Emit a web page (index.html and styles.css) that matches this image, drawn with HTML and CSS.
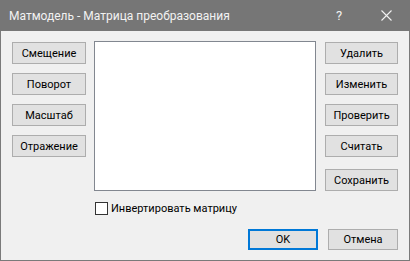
FILE: index.html
```html
<!DOCTYPE html>
<html lang="ru">
<head>
    <meta charset="UTF-8">
    <title>Матмодель - Матрица преобразования</title>
    <link rel="stylesheet" href="styles.css">
</head>
<body>
    <div class="window">
        <div class="titlebar">
            <span class="title">Матмодель - Матрица преобразования</span>
            <span class="help">?</span>
            <span class="close">
                <svg width="11" height="11" viewBox="0 0 11 11"><path d="M0.5 0.5 L10.5 10.5 M10.5 0.5 L0.5 10.5" stroke="#f2f2f2" stroke-width="1.1" fill="none"/></svg>
            </span>
        </div>
        <div class="content">
            <div class="main">
                <div class="col left-col">
                    <button class="btn">Смещение</button>
                    <button class="btn">Поворот</button>
                    <button class="btn">Масштаб</button>
                    <button class="btn">Отражение</button>
                </div>
                <div class="center-col">
                    <div class="listbox"></div>
                    <label class="check"><span class="box"></span>Инвертировать матрицу</label>
                </div>
                <div class="col right-col">
                    <button class="btn">Удалить</button>
                    <button class="btn">Изменить</button>
                    <button class="btn">Проверить</button>
                    <button class="btn">Считать</button>
                    <button class="btn save">Сохранить</button>
                </div>
            </div>
            <div class="footer">
                <button class="btn ok">OK</button>
                <button class="btn">Отмена</button>
            </div>
        </div>
    </div>
</body>
</html>
```

FILE: styles.css
```css
body {
    margin: 0;
    font-family: Roboto, "Noto Sans", sans-serif;
    font-size: 11px;
    color: #000;
}
.window {
    width: 410px;
    height: 261px;
    box-sizing: border-box;
    background: #f0f0f0;
    border: 1px solid #7a7a7a;
    border-top: none;
}
.titlebar {
    height: 31px;
    background: #767676;
    margin: 0 -1px;
    display: flex;
    align-items: center;
    color: #f2f2f2;
    font-size: 12px;
}
.title {
    margin-left: 9px;
    flex: 1;
}
.help {
    width: 12px;
    margin-right: 33px;
    font-size: 13px;
}
.close {
    width: 11px;
    height: 11px;
    margin-right: 18px;
    display: flex;
}
.content {
    padding: 10px 11px 0 11px;
}
.main {
    display: flex;
}
.col {
    display: flex;
    flex-direction: column;
    gap: 9px;
    padding-top: 1px;
}
.left-col {
    width: 74px;
}
.right-col {
    width: 73px;
}
.center-col {
    margin: 0 9px 0 8px;
}
.btn {
    height: 22px;
    box-sizing: border-box;
    background: #e1e1e1;
    border: 1px solid #adadad;
    font-family: inherit;
    font-size: 11px;
    color: #000;
    padding: 0;
}
.save {
    margin-top: 3px;
}
.listbox {
    width: 222px;
    height: 150px;
    box-sizing: border-box;
    background: #fff;
    border: 1px solid #828790;
}
.check {
    display: flex;
    align-items: center;
    margin-top: 11px;
    margin-left: 1px;
    height: 13px;
}
.box {
    width: 13px;
    height: 13px;
    box-sizing: border-box;
    border: 1px solid #333;
    background: #fff;
    margin-right: 3px;
}
.footer {
    display: flex;
    justify-content: flex-end;
    gap: 10px;
    margin-top: 14px;
}
.footer .btn {
    width: 70px;
    height: 21px;
}
.ok {
    border: 2px solid #0078d7;
}
```
